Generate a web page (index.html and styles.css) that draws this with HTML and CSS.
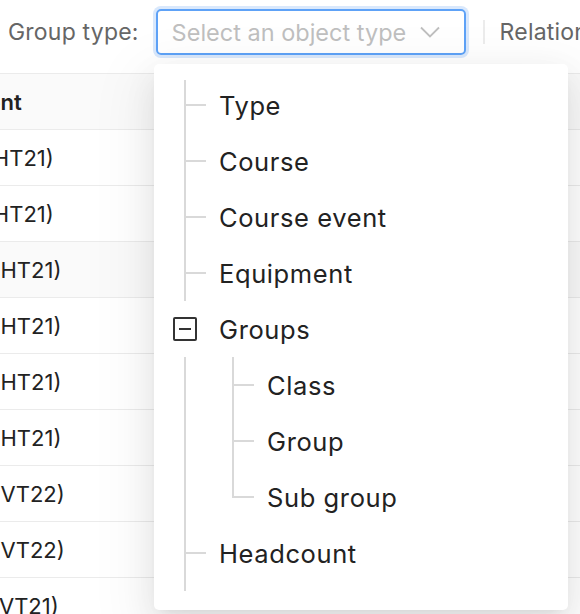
FILE: index.html
```html
<!DOCTYPE html>
<html lang="en">
<head>
  <meta charset="UTF-8" />
  <title>Group type</title>
  <link rel="stylesheet" href="styles.css">
</head>
<body>

  <div class="toolbar">
    <span class="label">Group type:</span>
    <div class="select">
      <span class="placeholder">Select an object type</span>
      <svg class="chevron" width="20" height="12" viewBox="0 0 20 12">
        <path d="M1 1.5 L10 10.5 L19 1.5" fill="none" stroke="#bfbfbf" stroke-width="1.8"/>
      </svg>
    </div>
    <span class="divider"></span>
    <span class="label">Relation</span>
  </div>

  <div class="table">
    <div class="row head"><div class="cell name">Course event</div></div>
    <div class="row"><div class="cell name">Biology A (HT21)</div></div>
    <div class="row"><div class="cell name">Biology A (HT21)</div></div>
    <div class="row hover"><div class="cell name">Chemistry (HT21)</div></div>
    <div class="row"><div class="cell name">Chemistry (HT21)</div></div>
    <div class="row"><div class="cell name">Chemistry (HT21)</div></div>
    <div class="row"><div class="cell name">Chemistry (HT21)</div></div>
    <div class="row"><div class="cell name">Chemistry (VT22)</div></div>
    <div class="row"><div class="cell name">Chemistry (VT22)</div></div>
    <div class="row"><div class="cell name">Biology 1a (VT21)</div></div>
  </div>

  <div class="dropdown">
    <div class="node"><span class="switcher"></span><span class="title">Type</span></div>
    <div class="node"><span class="switcher"></span><span class="title">Course</span></div>
    <div class="node"><span class="switcher"></span><span class="title">Course event</span></div>
    <div class="node"><span class="switcher"></span><span class="title">Equipment</span></div>
    <div class="node"><span class="switcher open"><i></i></span><span class="title">Groups</span></div>
    <div class="node"><span class="indent"></span><span class="switcher"></span><span class="title">Class</span></div>
    <div class="node"><span class="indent"></span><span class="switcher"></span><span class="title">Group</span></div>
    <div class="node"><span class="indent"></span><span class="switcher end"></span><span class="title">Sub group</span></div>
    <div class="node"><span class="switcher last"></span><span class="title">Headcount</span></div>
  </div>

</body>
</html>
```

FILE: styles.css
```css
body {
  margin: 0;
  font-family: Inter, "Noto Sans", sans-serif;
  background: #fff;
  color: #222;
  overflow: hidden;
  height: 614px;
}

.toolbar {
  display: flex;
  align-items: center;
  height: 64px;
  padding-left: 8px;
  white-space: nowrap;
}

.toolbar .label {
  font-size: 23px;
  letter-spacing: 0.2px;
  color: #666;
}

.select {
  display: flex;
  flex: none;
  align-items: center;
  justify-content: space-between;
  box-sizing: border-box;
  width: 310px;
  height: 46px;
  margin-left: 17px;
  padding: 0 24px 0 14px;
  border: 2px solid #5ea2f7;
  border-radius: 5px;
  box-shadow: 0 0 0 3px #d9e8fc;
}

.placeholder {
  font-size: 23.5px;
  color: #bfbfbf;
}

.divider {
  flex: none;
  width: 2px;
  height: 24px;
  background: #ececec;
  margin: 0 15px 0 17px;
}

.table {
  margin-top: 9px;
  border-top: 1px solid #ebebeb;
}

.row {
  display: flex;
  height: 55px;
  align-items: center;
  border-bottom: 1px solid #ebebeb;
}

.row.head {
  background: #fafafa;
  font-weight: 600;
}

.row.hover {
  background: #fafafa;
}

.cell.name {
  margin-left: -120px;
  font-size: 22px;
  white-space: nowrap;
}

.dropdown {
  position: absolute;
  left: 154px;
  top: 64px;
  width: 414px;
  box-sizing: border-box;
  padding: 13px 0 29px 9px;
  background: #fff;
  border-radius: 5px;
  box-shadow: 0 12px 32px rgba(0,0,0,0.08), 0 6px 12px -8px rgba(0,0,0,0.12), 0 18px 56px 16px rgba(0,0,0,0.05);
}

.node {
  display: flex;
  align-items: center;
  height: 56px;
}

.indent,
.switcher {
  position: relative;
  width: 48px;
  height: 56px;
  flex: none;
}

.indent::before,
.switcher::before {
  content: "";
  position: absolute;
  left: 21px;
  top: 0;
  bottom: 0;
  width: 2px;
  background: #d9d9d9;
}

.switcher::after {
  content: "";
  position: absolute;
  left: 22px;
  top: 27px;
  width: 21px;
  height: 2px;
  background: #d9d9d9;
}

.node:first-child .switcher::before {
  top: 3px;
}

.switcher.end::before {
  bottom: 27px;
}

.switcher.last::before {
  bottom: -10px;
}

.switcher.open::before,
.switcher.open::after {
  display: none;
}

.switcher.open i {
  position: absolute;
  left: 10px;
  top: 16px;
  width: 20px;
  height: 20px;
  border: 2px solid #333;
  border-radius: 2px;
}

.switcher.open i::after {
  content: "";
  position: absolute;
  left: 4px;
  top: 9px;
  width: 12px;
  height: 2px;
  background: #333;
}

.title {
  margin-left: 8px;
  font-size: 25.5px;
  letter-spacing: 0.6px;
  color: #222;
}
```
